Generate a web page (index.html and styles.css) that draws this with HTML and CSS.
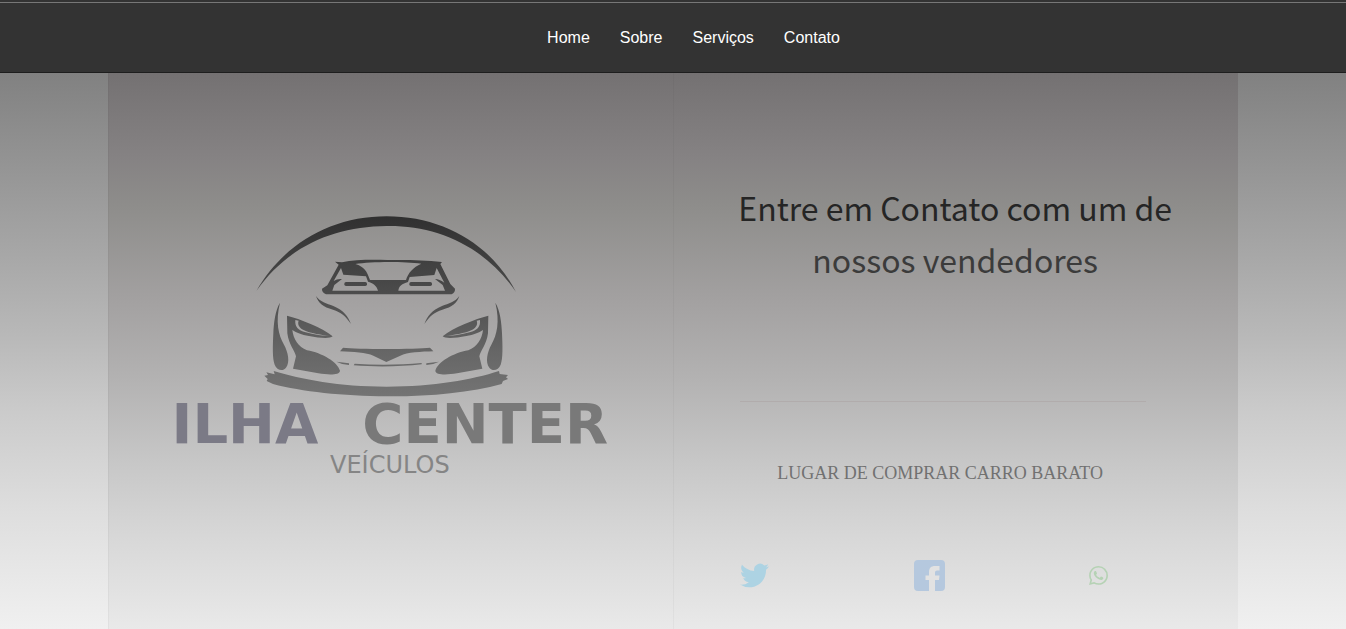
FILE: index.html
```html
<!DOCTYPE html>
<html lang="pt-BR">
<head>
<meta charset="utf-8">
<meta name="viewport" content="width=device-width, initial-scale=1">
<title>Ilha Center Veículos</title>
<link rel="stylesheet" href="styles.css">
</head>
<body>
<header class="topbar">
  <nav>
    <ul class="menu">
      <li><a href="#home">Home</a></li>
      <li><a href="#sobre">Sobre</a></li>
      <li><a href="#servicos">Serviços</a></li>
      <li><a href="#contato">Contato</a></li>
    </ul>
  </nav>
</header>
<main class="panels">
  <section class="panel brand">
    <svg class="car" viewBox="45 45 810 546" aria-hidden="true">
      <defs>
        <linearGradient id="fade" gradientUnits="userSpaceOnUse" x1="0" y1="50" x2="0" y2="590">
          <stop offset="0" stop-color="#303030"/>
          <stop offset=".4" stop-color="#4a4a4a"/>
          <stop offset=".75" stop-color="#666"/>
          <stop offset="1" stop-color="#747474"/>
        </linearGradient>
        <g id="side">
          <path d="M120 308C106 330 101 370 100 400C98 440 97 475 104 494C110 510 128 516 138 503C151 486 144 456 132 434C115 404 106 365 120 308Z"/>
          <path fill-rule="evenodd" d="M141 347C180 357 246 382 278 409C270 417 238 414 207 408C184 404 170 399 157 390C160 417 175 441 201 451C247 459 292 486 300 512C299 526 266 525 235 520L159 506L168 469C165 453 146 433 142 400ZM166 360C164 381 174 390 197 397C222 404 248 408 270 408C249 405 209 400 189 389C174 381 173 369 176 362Z"/>
          <path d="M228 288C240 306 260 310 280 318C311 331 324 349 333 372C316 347 303 337 279 329C249 321 235 309 228 288Z"/>
          <path d="M289 485L327 490V495Q306 494 289 485Z"/>
        </g>
      </defs>
      <g fill="url(#fade)">
        <path d="M49 273C130 132 273 49 440 49C608 49 754 132 828 276C732 137 591 76 440 78C283 80 146 136 49 273Z"/>
        <path fill-rule="evenodd" d="M285 185L306 187C342 179 390 179 442 180C501 179 550 180 606 186L601 192L631 252L645 266Q646 277 635 283H258Q245 277 246 266L262 256L296 194ZM303 204L281 243C288 238 297 236 306 237L283 255L277 272H414C410 256 398 249 384 245L378 229L310 224ZM590 204L583 225L509 231L504 246C486 251 477 258 475 272H615L608 255L585 237C595 237 602 241 613 248ZM346 192C373 200 381 214 390 240H498C504 220 519 201 544 191C491 184 394 184 346 192Z"/>
        <rect x="313" y="246" width="68" height="12" rx="5"/>
        <rect x="508" y="246" width="68" height="12" rx="5"/>
        <use href="#side"/>
        <use href="#side" transform="translate(886 0) scale(-1 1)"/>
        <path d="M309 443C350 448 526 448 570 443L580 454C545 455 501 457 481 467L439 486L400 467C379 458 340 455 300 454Z"/>
        <path d="M344 491C410 496 481 495 545 489V493C484 500 406 501 341 496Z"/>
        <path d="M101 513C184 538 297 560 440 560C581 560 697 539 777 513L779 522L804 525L798 532L804 537L789 543L785 552C691 578 566 590 440 589C308 588 185 575 99 552L80 543L83 537L73 527L84 525L79 517L104 523Z"/>
      </g>
    </svg>
    <div class="wordmark"><span class="ilha">ILHA</span><span>CENTER</span></div>
    <div class="submark">VEÍCULOS</div>
  </section>
  <section class="panel contact">
    <h1 class="title">Entre em Contato com um de <span class="title-rest">nossos vendedores</span></h1>
    <div class="details">
      <hr class="rule">
      <p class="slogan">LUGAR DE COMPRAR CARRO BARATO</p>
      <div class="social">
        <a href="#twitter" aria-label="Twitter"><svg class="twitter" viewBox="0 0 24 24"><path d="M23.953 4.57a10 10 0 01-2.825.775 4.958 4.958 0 002.163-2.723c-.951.555-2.005.959-3.127 1.184a4.92 4.92 0 00-8.384 4.482C7.69 8.095 4.067 6.13 1.64 3.162a4.822 4.822 0 00-.666 2.475c0 1.71.87 3.213 2.188 4.096a4.904 4.904 0 01-2.228-.616v.06a4.923 4.923 0 003.946 4.827 4.996 4.996 0 01-2.212.085 4.936 4.936 0 004.604 3.417 9.867 9.867 0 01-6.102 2.105c-.39 0-.779-.023-1.17-.067a13.995 13.995 0 007.557 2.209c9.053 0 13.998-7.496 13.998-13.985 0-.21 0-.42-.015-.63A9.935 9.935 0 0024 4.59z"/></svg></a>
        <a href="#facebook" aria-label="Facebook"><svg class="facebook" viewBox="0 0 31 31"><rect width="31" height="31" rx="4"/><path class="f" d="M15 31V20H11.500V15.500H15V12C15 8 17 6 21 6H25.500V10.500H23Q21 10.500 21 12.500V15.500H25.500L25 20H21V31Z"/></svg></a>
        <a href="#whatsapp" aria-label="WhatsApp"><svg class="whatsapp" viewBox="0 0 24 24"><path d="M17.472 14.382c-.297-.149-1.758-.867-2.03-.967-.273-.099-.471-.148-.67.15-.197.297-.767.966-.94 1.164-.173.199-.347.223-.644.075-.297-.15-1.255-.463-2.39-1.475-.883-.788-1.48-1.761-1.653-2.059-.173-.297-.018-.458.13-.606.134-.133.298-.347.446-.52.149-.174.198-.298.298-.497.099-.198.05-.371-.025-.52-.075-.149-.669-1.612-.916-2.207-.242-.579-.487-.5-.669-.51-.173-.008-.371-.01-.57-.01-.198 0-.52.074-.792.372-.272.297-1.04 1.016-1.04 2.479 0 1.462 1.065 2.875 1.213 3.074.149.198 2.096 3.2 5.077 4.487.709.306 1.262.489 1.694.625.712.227 1.36.195 1.871.118.571-.085 1.758-.719 2.006-1.413.248-.694.248-1.289.173-1.413-.074-.124-.272-.198-.57-.347m-5.421 7.403h-.004a9.87 9.87 0 01-5.031-1.378l-.361-.214-3.741.982.998-3.648-.235-.374a9.86 9.86 0 01-1.51-5.26c.001-5.45 4.436-9.884 9.888-9.884 2.64 0 5.122 1.03 6.988 2.898a9.825 9.825 0 012.893 6.994c-.003 5.45-4.437 9.884-9.885 9.884m8.413-18.297A11.815 11.815 0 0012.05 0C5.495 0 .16 5.335.157 11.892c0 2.096.547 4.142 1.588 5.945L.057 24l6.305-1.654a11.882 11.882 0 005.683 1.448h.005c6.554 0 11.89-5.335 11.893-11.893a11.821 11.821 0 00-3.48-8.413z"/></svg></a>
      </div>
    </div>
  </section>
</main>
</body>
</html>
```
FILE: styles.css
```css
* {
  box-sizing: border-box;
}

body {
  margin: 0;
  min-height: 100vh;
  display: flex;
  flex-direction: column;
  font-family: "Liberation Sans", Arial, sans-serif;
  background: #333;
}

.topbar {
  margin-top: 2px;
  border-top: 1px solid #777;
  border-bottom: 1px solid #1e1e1e;
  background: #333;
}

.menu {
  margin: 0;
  padding: 24px 0 24px 41px;
  display: flex;
  justify-content: center;
  gap: 30px;
  list-style: none;
  font-size: 16px;
  line-height: 21px;
}

.menu a {
  color: #fff;
  text-decoration: none;
}

.panels {
  flex: 1;
  display: grid;
  grid-template-columns: 1fr 1fr;
  padding: 0 8%;
  background: linear-gradient(#818181, #9e9e9e 25%, #b8b8b8 47%, #cbcbcb 61%, #dedede 79%, #f0f0f0);
}

.panel {
  background: linear-gradient(#747172, #858283 15%, #8e8d8b 24%, #a3a1a1 41%, #b3b2b2 55%, #c7c7c7 70%, #d8d8d8 84%, #e9e9e9);
  border-left: 1px solid rgba(0, 0, 0, 0.03);
}

.brand {
  display: flex;
  flex-direction: column;
  align-items: center;
  padding: 142px 16px 0 14px;
}

.car {
  width: 270px;
  height: 182px;
}

.wordmark {
  display: flex;
  gap: 44px;
  color: #797979;
  font-family: "DejaVu Sans", sans-serif;
  font-size: 56px;
  font-weight: 700;
  line-height: 54px;
}

.ilha {
  color: #7b7a86;
}

.submark {
  color: #858585;
  font-family: "DejaVu Sans", sans-serif;
  font-size: 24px;
  line-height: 28px;
}

.contact {
  padding: 108px 42px 36px 40px;
}

.title {
  margin: 0;
  color: #252525;
  font-family: "Noto Sans CJK JP", "Noto Sans", sans-serif;
  font-size: 32px;
  font-weight: 400;
  line-height: 52px;
  text-align: center;
}

.title-rest {
  display: block;
  color: #3b3b3b;
}

.details {
  margin: 116px 50px 0 26px;
}

.rule {
  margin: 0;
  border: 0;
  border-top: 1px solid #b1acac;
}

.slogan {
  margin: 60px 6px 0 0;
  color: #717171;
  font-family: "Liberation Serif", serif;
  font-size: 18px;
  line-height: 22px;
  text-align: center;
}

.social {
  margin: 76px 38px 0 0;
  display: flex;
  align-items: center;
  justify-content: space-between;
}

.social a,
.social svg {
  display: block;
}

.twitter {
  width: 29px;
  height: 29px;
  fill: #add3e3;
}

.facebook {
  width: 31px;
  height: 31px;
  fill: #b5c8de;
}

.facebook .f {
  fill: #e2e2e2;
}

.whatsapp {
  width: 19px;
  height: 19px;
  fill: #b5d2b4;
}
```
